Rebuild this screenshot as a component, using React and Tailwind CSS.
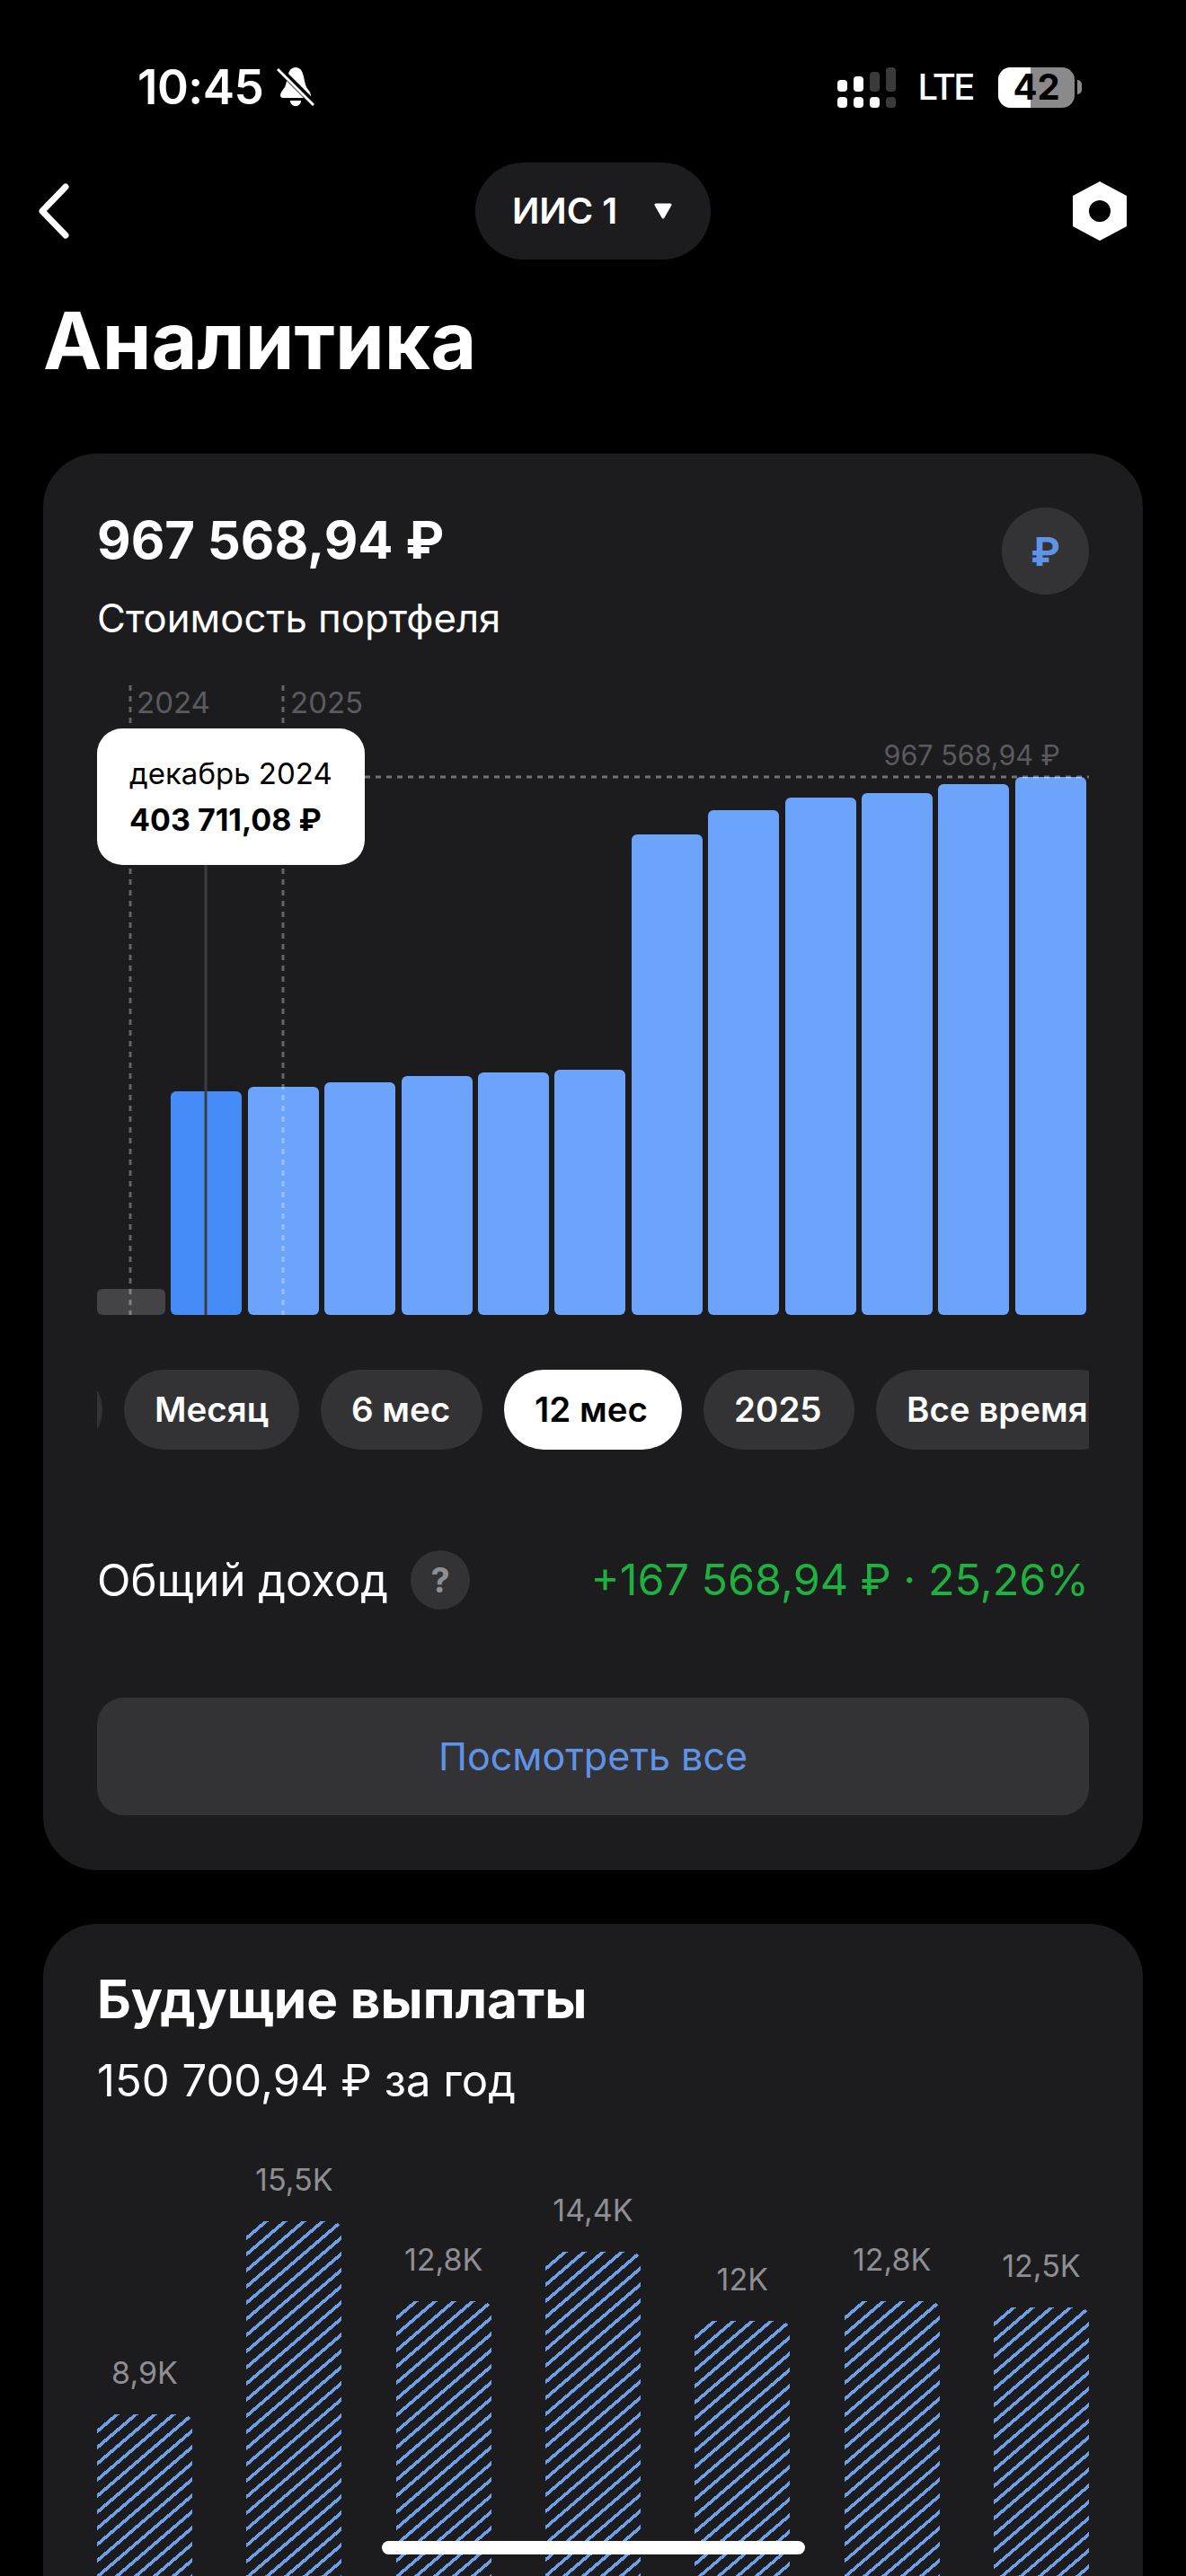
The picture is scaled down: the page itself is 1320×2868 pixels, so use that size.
import { useState } from "react";

const portfolioBars = [249, 254, 259, 266, 270, 273, 535, 562, 576, 581, 591, 599];
const payouts = [
  { label: "8,9K", height: 241 },
  { label: "15,5K", height: 456 },
  { label: "12,8K", height: 367 },
  { label: "14,4K", height: 422 },
  { label: "12K", height: 345 },
  { label: "12,8K", height: 367 },
  { label: "12,5K", height: 360 },
];
const periods = [
  { name: "Месяц", width: "w-[195px]" },
  { name: "6 мес", width: "w-[180px]" },
  { name: "12 мес", width: "w-[198px]" },
  { name: "2025", width: "w-[168px]" },
  { name: "Все время", width: "w-[271px]" },
];

const StatusBar = () => (
  <div className="flex h-[181px] items-start justify-between pl-[153px] pr-[116px] pt-[74px] text-white">
    <div className="flex h-[46px] items-center gap-[15px]">
      <span className="text-[53px] font-semibold leading-[46px] tracking-[-0.5px]">10:45</span>
      <svg width="42" height="46" viewBox="0 0 42 46">
        <path d="M21 1c4 0 7 3 8 7 2 6 2 11 4 15 2 3 5 6 5 9 0 2-1 3-3 3H7c-2 0-3-1-3-3 0-3 3-6 5-9 2-4 2-9 4-15 1-4 4-7 8-7z" fill="#fff" />
        <path d="M15 38h12c0 4-3 6-6 6s-6-2-6-6z" fill="#fff" />
        <path d="M2 2l40 40" stroke="#000" strokeWidth="7" />
        <path d="M1 3l40 40" stroke="#fff" strokeWidth="3" />
      </svg>
    </div>
    <div className="flex h-[46px] items-center">
      <svg width="65" height="45" viewBox="0 0 65 45">
        <rect x="0" y="14" width="11" height="13" rx="4" fill="#fff" />
        <rect x="18" y="10" width="11" height="17" rx="4" fill="#fff" />
        <rect x="36" y="5" width="11" height="22" rx="4" fill="#3a3a3a" />
        <rect x="54" y="0" width="11" height="27" rx="4" fill="#3a3a3a" />
        <rect x="0" y="33" width="11" height="12" rx="4" fill="#fff" />
        <rect x="18" y="33" width="11" height="12" rx="4" fill="#fff" />
        <rect x="36" y="33" width="11" height="12" rx="4" fill="#fff" />
        <rect x="54" y="33" width="11" height="12" rx="4" fill="#3a3a3a" />
      </svg>
      <span className="ml-[24px] text-[40px] font-medium leading-[46px] tracking-[-2.5px]">LTE</span>
      {/* battery level splits the pill into white and grey */}
      <div className="relative ml-[28px] flex h-[45px] w-[85px] rounded-[14px] bg-[#8a8a8a]">
        <div className="h-full w-[36px] rounded-l-[14px] bg-white" />
        <span className="absolute inset-0 flex items-center justify-center text-[40px] font-bold leading-none text-black">42</span>
      </div>
      <div className="ml-[3px] h-[16px] w-[5px] rounded-r-full bg-[#8a8a8a]" />
    </div>
  </div>
);

const NavBar = () => (
  <div className="grid h-[108px] grid-cols-3 items-center px-[40px]">
    <svg width="40" height="66" viewBox="0 0 40 66" className="justify-self-start">
      <path d="M33 6L7 33l26 27" fill="none" stroke="#fff" strokeWidth="7" strokeLinecap="round" strokeLinejoin="round" />
    </svg>
    <div className="flex h-[108px] w-[262px] items-center justify-self-center rounded-full bg-[#1c1c1e] pl-[41px]">
      <span className="text-[40px] font-semibold leading-none text-white">ИИС 1</span>
      <svg width="22" height="18" viewBox="0 0 22 18" className="ml-[40px]">
        <path d="M3 2h16l-8 14z" fill="#fff" stroke="#fff" strokeWidth="3" strokeLinejoin="round" />
      </svg>
    </div>
    <svg width="60" height="66" viewBox="0 0 60 66" className="mr-[26px] justify-self-end">
      <path fillRule="evenodd" d="M30 0l30 16v34L30 66 0 50V16zM30 21a12 12 0 100 24 12 12 0 000-24z" fill="#fff" />
    </svg>
  </div>
);

const PortfolioChart = () => (
  <div className="relative mt-[46px] h-[701px] w-[1104px]">
    <div className="flex h-full items-end gap-[6.4px]">
      <div className="h-[29px] w-[76px] rounded-[6px] bg-[#444446]" />
      {portfolioBars.map((height, i) => (
        <div
          key={i}
          className={i === 0 ? "w-[79px] rounded-[6px] bg-[#468cf8]" : "w-[79px] rounded-[6px] bg-[#6ca3fb]"}
          style={{ height }}
        />
      ))}
    </div>

    <svg width="1104" height="701" className="absolute left-0 top-0">
      <line x1="37" y1="0" x2="37" y2="701" stroke="#fff" strokeOpacity="0.32" strokeWidth="3" strokeDasharray="6 6" />
      <line x1="207" y1="0" x2="207" y2="701" stroke="#fff" strokeOpacity="0.32" strokeWidth="3" strokeDasharray="6 6" />
      <line x1="298" y1="102" x2="1104" y2="102" stroke="#fff" strokeOpacity="0.38" strokeWidth="3" strokeDasharray="6 6" />
      <line x1="121" y1="200" x2="121" y2="701" stroke="#3c3c3f" strokeWidth="3" />
    </svg>

    <span className="absolute left-[44px] top-[0px] text-[33px] leading-[38px] text-[#5a5a5e]">2024</span>
    <span className="absolute left-[215px] top-[0px] text-[33px] leading-[38px] text-[#5a5a5e]">2025</span>
    <span className="absolute right-[32px] top-[58px] text-[30.5px] leading-[40px] text-[#5a5a5e]">967 568,94 ₽</span>

    <div className="absolute left-0 top-[48px] flex h-[152px] w-[298px] flex-col rounded-[28px] bg-white pl-[36px] pt-[30px] text-black">
      <span className="text-[33px] leading-[40px]">декабрь 2024</span>
      <span className="mt-[12px] text-[34px] font-bold leading-[40px]">403 711,08 ₽</span>
    </div>
  </div>
);

const PeriodTabs = () => {
  const [active, setActive] = useState("12 мес");
  return (
    <div className="mt-[61px] flex w-[1104px] gap-[24px] overflow-hidden">
      <div className="ml-[-94px] h-[89px] w-[100px] shrink-0 rounded-full bg-[#333336]" />
      {periods.map((p) => (
        <button
          key={p.name}
          onClick={() => setActive(p.name)}
          className={`h-[89px] shrink-0 rounded-full pl-[34px] text-left text-[38.5px] font-semibold leading-none ${p.width} ${
            p.name === active ? "bg-white text-black" : "bg-[#333336] text-white"
          }`}
        >
          {p.name}
        </button>
      ))}
    </div>
  );
};

const PayoutChart = () => (
  <div className="flex h-[582px] items-end justify-between">
    {payouts.map((p, i) => (
      <div key={i} className="flex w-[106px] flex-col items-center">
        <span className="mb-[26px] text-[34px] leading-[40px] text-[#8e8e93]">{p.label}</span>
        <div
          className="w-full rounded-t-[10px] bg-[repeating-linear-gradient(139.4deg,#6b9fe8_0px,#6b9fe8_2.7px,transparent_2.7px,transparent_12.7px,#6b9fe8_12.7px,#6b9fe8_13.67px)]"
          style={{ height: p.height }}
        />
      </div>
    ))}
  </div>
);

export default function App() {
  return (
    <div className="relative h-[2868px] w-[1320px] overflow-hidden bg-black font-['Inter',sans-serif]">
      <StatusBar />
      <NavBar />

      <h1 className="ml-[48px] mt-[46px] text-[88px] font-bold leading-[88px] text-white">Аналитика</h1>

      {/* Portfolio value card */}
      <div className="mx-[48px] mt-[82px] rounded-[60px] bg-[#1c1c1e] px-[60px] pb-[61px] pt-[60px]">
        <div className="flex items-start justify-between">
          <div>
            <div className="text-[58px] font-bold leading-[72px] text-white">967 568,94 ₽</div>
            <div className="mt-[24px] text-[43.7px] leading-[56px] text-white">Стоимость портфеля</div>
          </div>
          <div className="flex h-[97px] w-[97px] items-center justify-center rounded-full bg-[#333336] text-[44px] font-bold text-[#5f93e8]">₽</div>
        </div>

        <PortfolioChart />
        <PeriodTabs />

        <div className="mt-[112px] flex h-[66px] items-center justify-between">
          <div className="flex items-center gap-[25px]">
            <span className="text-[49px] leading-none text-white">Общий доход</span>
            <div className="flex h-[66px] w-[66px] items-center justify-center rounded-full bg-[#333336] text-[38px] font-bold text-[#8e8e93]">?</div>
          </div>
          <span className="text-[48.5px] leading-none text-[#1db23f]">+167 568,94 ₽ · 25,26%</span>
        </div>

        <button className="mt-[98px] h-[131px] w-full rounded-[30px] bg-[#333336] text-[43px] leading-none text-[#5f93e8]">
          Посмотреть все
        </button>
      </div>

      {/* Upcoming payouts card */}
      <div className="mx-[48px] mt-[60px] rounded-[60px] bg-[#1c1c1e] px-[60px] pt-[50px]">
        <div className="text-[58.5px] font-bold leading-[68px] text-white">Будущие выплаты</div>
        <div className="mt-[27px] text-[49px] leading-[60px] text-white">150 700,94 ₽ за год</div>
        <PayoutChart />
      </div>

      {/* Home indicator */}
      <div className="absolute bottom-[24px] left-[425px] h-[15px] w-[471px] rounded-full bg-white" />
    </div>
  );
}
